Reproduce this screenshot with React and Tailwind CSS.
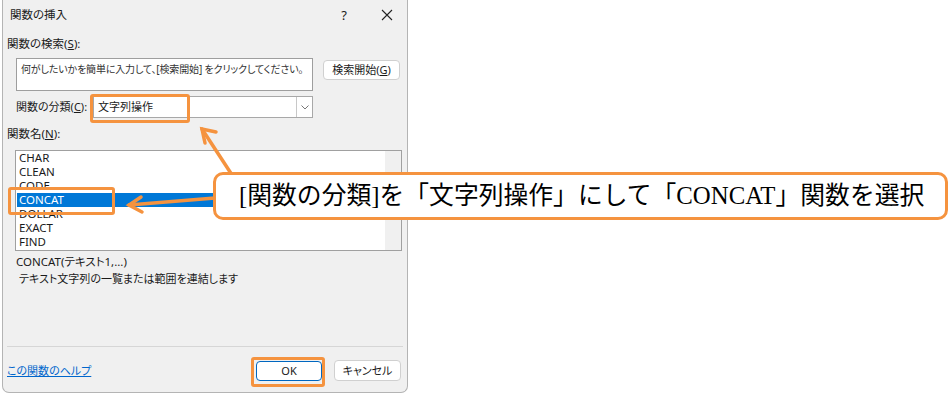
import React from 'react';

const ORANGE = '#f5933f';

const items = ['CHAR', 'CLEAN', 'CODE', 'CONCAT', 'DOLLAR', 'EXACT', 'FIND'];

const App = () => {
  return (
    <div className="relative w-[952px] h-[394px] bg-white overflow-hidden font-['Noto_Sans','Noto_Sans_CJK_JP',sans-serif] [font-feature-settings:'palt'] text-[#1a1a1a]">
      {/* Dialog */}
      <div className="ml-[2px] w-[406px] h-[393px] bg-[#f0f0f0] border-x border-b border-[#b4b4b4] rounded-b-[7px] flex flex-col">
        {/* Title bar */}
        <div className="h-[30px] flex items-center pl-[7px] pr-[14px]">
          <span className="text-[11.5px] leading-[14px]">関数の挿入</span>
          <span className="ml-auto text-[13px] leading-[14px]">?</span>
          <svg className="ml-[34px]" width="12" height="12" viewBox="0 0 12 12">
            <path d="M1 1 L11 11 M11 1 L1 11" stroke="#222" strokeWidth="1.1" />
          </svg>
        </div>

        {/* 関数の検索 */}
        <div className="mt-[7px] ml-[4px] text-[11.5px] leading-[14px]">
          関数の検索(<span className="underline">S</span>):
        </div>
        <div className="mt-[7px] flex">
          <div className="ml-[13px] w-[297px] h-[33px] bg-white border border-[#9e9e9e] pl-[4px] pt-[3px] text-[10px] leading-[14px] tracking-[-0.15px] text-[#333] whitespace-nowrap">
            何がしたいかを簡単に入力して、[検索開始] をクリックしてください。
          </div>
          <button className="ml-[10px] mt-[2px] w-[77px] h-[20px] bg-white border border-[#d0d0d0] rounded-[4px] text-[11px] leading-[14px] flex items-center justify-center">
            検索開始(<span className="underline">G</span>)
          </button>
        </div>

        {/* 関数の分類 */}
        <div className="mt-[5px] flex items-center">
          <span className="ml-[13px] w-[77px] text-[11px] leading-[14px]">
            関数の分類(<span className="underline">C</span>):
          </span>
          <div className="w-[220px] h-[22px] bg-white border border-[#a8a8a8] flex items-center">
            <span className="pl-[4px] text-[11px] leading-[14px]">文字列操作</span>
            <div className="ml-auto w-[16px] h-full border-l border-[#c8c8c8] flex items-center justify-center">
              <svg width="8" height="5" viewBox="0 0 8 5">
                <path d="M0.5 0.5 L4 4 L7.5 0.5" stroke="#777" strokeWidth="1" fill="none" />
              </svg>
            </div>
          </div>
        </div>

        {/* 関数名 */}
        <div className="mt-[9px] ml-[4px] text-[11.5px] leading-[14px]">
          関数名(<span className="underline">N</span>):
        </div>
        <div className="mt-[9px] ml-[12px] w-[387px] h-[101px] bg-white border border-[#a0a0a0] flex">
          <div className="flex-1 pl-[1px]">
            {items.map((it) => (
              <div
                key={it}
                className={`h-[14px] pl-[2px] text-[11.5px] leading-[14px] ${it === 'CONCAT' ? 'bg-[#0078d7] text-white' : ''}`}
              >
                {it}
              </div>
            ))}
          </div>
          <div className="w-[16px] h-full bg-[#f0f0f0] relative">
            <span className="absolute left-[6px] top-[21px] w-[2px] h-[3px] bg-[#9a9a9a]" />
          </div>
        </div>

        <div className="mt-[4px] ml-[13px] text-[11.5px] leading-[14px]">CONCAT(テキスト1,...)</div>
        <div className="mt-[3px] ml-[16px] text-[11px] leading-[14px]">テキスト文字列の一覧または範囲を連結します</div>

        <div className="mt-[60px] mx-[4px] h-px bg-[#d6d6d6]" />

        <div className="mt-[13px] flex items-center">
          <a className="ml-[4px] text-[11px] leading-[14px] text-[#0066cc] underline">この関数のヘルプ</a>
          <button className="ml-auto w-[66px] h-[20px] bg-white border border-[#0067c0] rounded-[4px] text-[11px] leading-[14px]">OK</button>
          <button className="ml-[12px] mr-[6px] w-[67px] h-[21px] bg-white border border-[#d0d0d0] rounded-[4px] text-[11px] leading-[14px]">キャンセル</button>
        </div>
      </div>

      {/* Highlight boxes */}
      <div className="absolute left-[90px] top-[94px] w-[100px] h-[29px] border-[3px] border-[#f5933f] rounded-[3px]" />
      <div className="absolute left-[8px] top-[187px] w-[107px] h-[28px] border-[3px] border-[#f5933f] rounded-[3px]" />
      <div className="absolute left-[251px] top-[357px] w-[74px] h-[30px] border-[3px] border-[#f5933f] rounded-[3px]" />

      {/* Arrows */}
      <svg className="absolute left-0 top-0 pointer-events-none" width="952" height="394">
        <g stroke={ORANGE} strokeWidth="3.5" strokeLinecap="round" fill="none">
          <path d="M234 178 L202 129" />
          <path d="M216 132 L202 129 L205 143" />
          <path d="M215 198 L129 205" />
          <path d="M141 197 L129 205 L142 212" />
        </g>
      </svg>

      {/* Callout */}
      <div className="absolute left-[213px] top-[172px] w-[735px] h-[48px] bg-white border-[3px] border-[#f5933f] rounded-[10px] flex items-center pl-[23px]">
        <span className="font-['Liberation_Serif','Noto_Sans_CJK_JP',serif] [font-feature-settings:normal] text-[24.8px] leading-[30px] text-black whitespace-nowrap">
          [関数の分類]を「文字列操作」にして「CONCAT」関数を選択
        </span>
      </div>
    </div>
  );
};

export default App;
